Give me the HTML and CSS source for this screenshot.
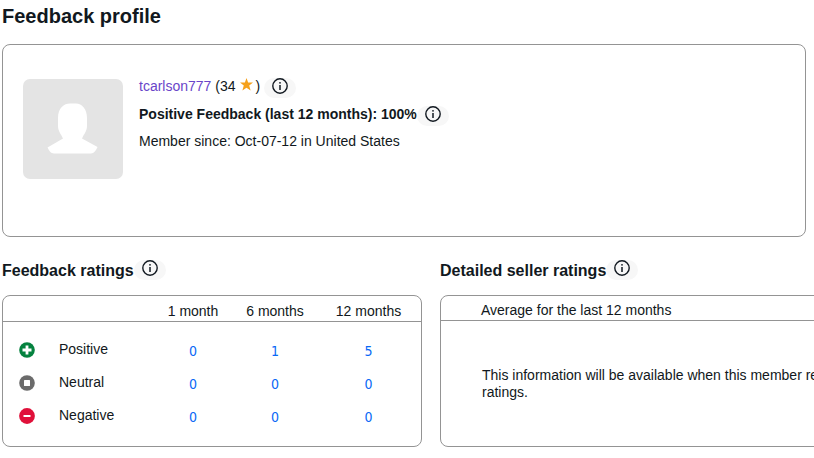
FILE: index.html
```html
<!DOCTYPE html>
<html lang="en">
<head>
<meta charset="utf-8">
<title>Feedback profile</title>
<link rel="stylesheet" href="styles.css">
</head>
<body>
<svg class="defs" aria-hidden="true">
  <symbol id="info" viewBox="0 0 16 16">
    <circle cx="8" cy="8" r="7.2" fill="none" stroke="currentColor" stroke-width="1.4"/>
    <circle cx="8" cy="4.8" r="0.9" fill="currentColor"/>
    <path d="M8 7v5" stroke="currentColor" stroke-width="1.5"/>
  </symbol>
</svg>
<main class="page">
  <h1 class="page-title">Feedback profile</h1>

  <section class="panel profile">
    <svg class="avatar" viewBox="0 0 100 100" role="img" aria-label="Member">
      <rect width="100" height="100" rx="7" fill="#e4e4e4"/>
      <path d="M35 39C35 29 41 24.500 47 24.500H53C59 24.500 64 30 64 39V47C64 52 61 55 59 59.500L74.500 68C73 71.500 71 74.500 68 74.500H31C28 74.500 26 71.500 24.500 68.500L40 59.500C38 55 35 52 35 47Z" fill="#fff"/>
    </svg>
    <div class="details">
      <p class="line">
        <span><a class="member" href="#">tcarlson777</a> (34 <svg class="star" viewBox="0 0 12 12" aria-hidden="true"><path d="M6 0L7.500 4.100H12L8.500 6.900L9.800 11.500L6 8.900L2.200 11.500L3.500 6.900L0 4.100H4.500Z" fill="#f5a11c"/></svg>)</span>
        <button class="info" type="button" aria-label="Feedback score help"><svg><use href="#info"/></svg></button>
      </p>
      <p class="line strong">
        <span>Positive Feedback (last 12 months): 100%</span>
        <button class="info" type="button" aria-label="Positive feedback help"><svg><use href="#info"/></svg></button>
      </p>
      <p class="line">Member since: Oct-07-12 in United States</p>
    </div>
  </section>

  <div class="columns">
    <section>
      <div class="heading">
        <h2>Feedback ratings</h2>
        <button class="info" type="button" aria-label="Feedback ratings help"><svg><use href="#info"/></svg></button>
      </div>
      <div class="panel">
        <table class="ratings">
          <colgroup><col class="c-icon"><col class="c-label"><col class="c-num"><col class="c-num"><col></colgroup>
          <thead>
            <tr><td colspan="2"></td><th scope="col">1 month</th><th scope="col">6 months</th><th scope="col">12 months</th></tr>
          </thead>
          <tbody>
            <tr>
              <td class="mark"><svg viewBox="0 0 16 16" aria-hidden="true"><circle cx="8" cy="8" r="7.800" fill="#05823f"/><path d="M8 3.500v9M3.500 8h9" stroke="#fff" stroke-width="2.800"/></svg></td>
              <th scope="row">Positive</th>
              <td><a href="#">0</a></td><td><a href="#">1</a></td><td><a href="#">5</a></td>
            </tr>
            <tr>
              <td class="mark"><svg viewBox="0 0 16 16" aria-hidden="true"><circle cx="8" cy="8" r="7.800" fill="#6b6b6b"/><rect x="5" y="5" width="6" height="6" rx="0.500" fill="#fff"/></svg></td>
              <th scope="row">Neutral</th>
              <td><a href="#">0</a></td><td><a href="#">0</a></td><td><a href="#">0</a></td>
            </tr>
            <tr>
              <td class="mark"><svg viewBox="0 0 16 16" aria-hidden="true"><circle cx="8" cy="8" r="7.900" fill="#e0103a"/><path d="M4.500 8h7" stroke="#fff" stroke-width="2"/></svg></td>
              <th scope="row">Negative</th>
              <td><a href="#">0</a></td><td><a href="#">0</a></td><td><a href="#">0</a></td>
            </tr>
          </tbody>
        </table>
      </div>
    </section>

    <section class="seller">
      <div class="heading">
        <h2>Detailed seller ratings</h2>
        <button class="info" type="button" aria-label="Detailed seller ratings help"><svg><use href="#info"/></svg></button>
      </div>
      <div class="panel">
        <h3>Average for the last 12 months</h3>
        <p class="notice">This information will be available when this member receives<br>ratings.</p>
      </div>
    </section>
  </div>
</main>
</body>
</html>
```

FILE: styles.css
```css
* {
  box-sizing: border-box;
}

body {
  margin: 0;
  background: #fff;
  color: #111820;
  font: 14px/17px "Liberation Sans", Arial, sans-serif;
  overflow-x: hidden;
}

h1, h2, h3, p {
  margin: 0;
}

a {
  text-decoration: none;
}

.defs {
  display: none;
}

.page {
  padding: 4px 8px 10px 2px;
}

.page-title {
  font-size: 20px;
  line-height: 24px;
}

.panel {
  border: 1px solid #949494;
  border-radius: 8px;
}

.profile {
  display: flex;
  gap: 16px;
  margin-top: 16px;
  padding: 34px 20px 57px;
}

.avatar {
  flex: none;
  width: 100px;
  height: 100px;
}

.line {
  display: flex;
  align-items: flex-end;
  height: 16px;
  margin-bottom: 11px;
}

.details .line:first-child {
  margin-bottom: 12px;
}

.strong {
  font-weight: bold;
}

.member {
  color: #6a45c9;
}

.star {
  width: 13px;
  height: 13px;
  margin: 0 2px 0 1px;
}

.info {
  display: flex;
  justify-content: center;
  align-items: flex-start;
  flex: none;
  width: 32px;
  height: 20px;
  padding: 0;
  border: 0;
  border-radius: 10px;
  background: #f7f7f7;
  color: #111820;
}

.line .info {
  align-self: center;
  margin-top: 2px;
}

.info svg {
  width: 16px;
  height: 16px;
}

.line:first-child .info {
  margin-left: 4px;
}

.columns {
  display: grid;
  grid-template-columns: 420px minmax(0, 1fr);
  gap: 18px;
  margin-top: 23px;
}

.heading {
  display: flex;
  align-items: center;
  height: 20px;
  margin-bottom: 15px;
}

h2 {
  padding-top: 2px;
  font-size: 16px;
  line-height: 20px;
}

.ratings {
  width: 100%;
  height: 150px;
  table-layout: fixed;
  border-collapse: separate;
  border-spacing: 0;
}

.c-icon {
  width: 56px;
}

.c-label {
  width: 93px;
}

.c-num {
  width: 82px;
}

.ratings td,
.ratings th {
  padding: 0;
  font-weight: normal;
  text-align: center;
}

.ratings thead th,
.ratings thead td {
  height: 26px;
  padding-top: 5px;
  border-bottom: 1px solid #949494;
}

.ratings tbody::before,
.ratings tbody::after {
  content: "";
  display: table-row;
  height: 11px;
}

.ratings tbody::after {
  height: 14px;
}

.ratings tbody tr {
  height: 33px;
}

.ratings tbody th {
  text-align: left;
}

.ratings tbody a {
  color: #0968f6;
  font-family: "DejaVu Sans Condensed", "DejaVu Sans", Verdana, sans-serif;
}

.ratings tbody td {
  padding-top: 3px;
}

.ratings .mark {
  padding: 0 0 0 16px;
  text-align: left;
}

.mark svg {
  display: block;
  width: 16px;
  height: 16px;
}

.seller {
  margin-right: -48px;
}

.seller .panel {
  height: 152px;
}

h3 {
  padding: 6px 40px 1px;
  border-bottom: 1px solid #949494;
  font-size: 14px;
  font-weight: normal;
}

.notice {
  padding: 46px 0 0 41px;
  white-space: nowrap;
}
```
